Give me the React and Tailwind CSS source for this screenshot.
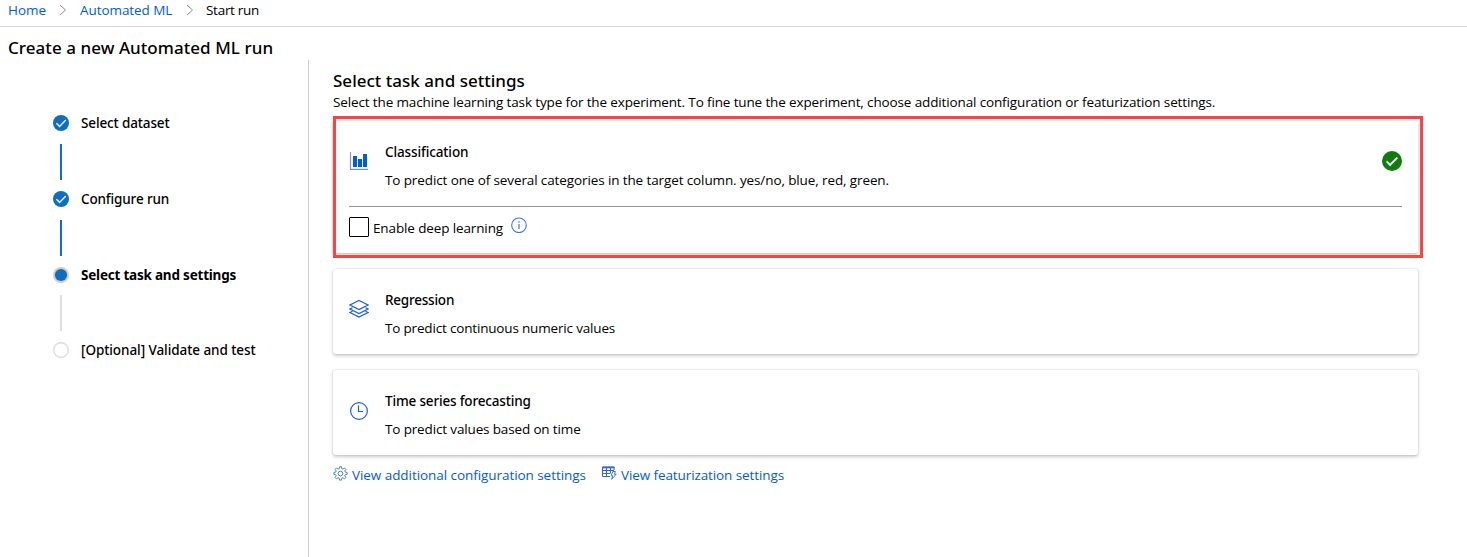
const STEPS = [
  { label: 'Select dataset', state: 'done', text: 'tracking-[-0.13px] font-medium' },
  { label: 'Configure run', state: 'done', text: 'tracking-[-0.14px] font-medium' },
  { label: 'Select task and settings', state: 'current', text: 'tracking-[-0.21px] font-bold' },
  { label: '[Optional] Validate and test', state: 'todo', text: 'tracking-[-0.07px] font-medium' },
];

function Crumb() {
  return (
    <svg className="h-3 w-2" viewBox="0 0 8 12" fill="none" stroke="#8f8d8b" strokeWidth="1">
      <path d="M1 1l5.5 5L1 11" />
    </svg>
  );
}

function StepIcon({ state }) {
  if (state === 'done') {
    return (
      <svg className="size-4" viewBox="0 0 16 16">
        <circle cx="8" cy="8" r="8" fill="#106ebe" />
        <path d="M3.4 8.200l3.200 3.200 6.200-6.400" fill="none" stroke="#e9f3fb" strokeWidth="1.500" />
      </svg>
    );
  }
  if (state === 'current') {
    return (
      <svg className="size-4" viewBox="0 0 16 16">
        <circle cx="8" cy="8" r="8" fill="#d0cecc" />
        <circle cx="8" cy="8" r="6.1" fill="#106ebe" />
      </svg>
    );
  }
  return (
    <svg className="size-4" viewBox="0 0 16 16">
      <circle cx="8" cy="8" r="7.3" fill="#fff" stroke="#e1dfdd" strokeWidth="1.4" />
    </svg>
  );
}

function Chart() {
  return (
    <svg className="h-5 w-5" viewBox="0 0 20 20">
      <path d="M1.500 1v17.500" stroke="#8a8ee8" strokeWidth="1.200" fill="none" />
      <path d="M1 18.400h18" stroke="#6f8fe6" strokeWidth="1.200" fill="none" />
      <path d="M4 5h4v11H4zM9 8h4v8H9zM14 3h4v13h-4z" fill="#015cda" />
    </svg>
  );
}

function Layers() {
  return (
    <svg className="h-5 w-5" viewBox="0 0 20 20" fill="none" stroke="#1f62dc" strokeWidth="1.2">
      <path d="M10 1.500l9 4.500-9 4.500-9-4.500z" />
      <path d="M3.500 8.700L1 10l9 4.500 9-4.500-2.500-1.300M3.500 12.200L1 13.500 10 18l9-4.500-2.500-1.300" />
    </svg>
  );
}

function Clock() {
  return (
    <svg className="h-5 w-5" viewBox="0 0 20 20" fill="none" stroke="#1f62dc" strokeWidth="1.2">
      <circle cx="10" cy="10" r="8.400" />
      <path d="M9.500 4.500v6H14" />
    </svg>
  );
}

function Gear() {
  return (
    <svg className="size-[15px]" viewBox="0 0 16 16" fill="none" stroke="#3f78e0" strokeWidth="1" strokeLinejoin="round">
      <path d="M7 .8h2l.4 2 1.200.5 1.700-1.200 1.500 1.500-1.200 1.700.5 1.200 2 .4v2l-2 .4-.5 1.200 1.200 1.700-1.500 1.500-1.700-1.200-1.200.5-.4 2H7l-.4-2-1.200-.5-1.700 1.200-1.500-1.500 1.200-1.700-.5-1.200-2-.4v-2l2-.4.500-1.200-1.200-1.700 1.500-1.500 1.700 1.200 1.200-.5z" />
      <circle cx="8" cy="8" r="2.500" />
    </svg>
  );
}

function TableBolt() {
  return (
    <svg className="h-[14px] w-[15px]" viewBox="0 0 15 14" fill="none" stroke="#3565d2" strokeWidth="1">
      <path d="M8 10.500H.5V1h11.500v3" />
      <path d="M0 1.500h12.500" strokeWidth="1.600" />
      <path d="M.5 4.500h11.500M.5 7.500h8M4.500 2v8.500M8.500 2v5" />
      <path d="M10.800 5.500h2.700l-1.200 2.700h1.900L9.600 13.300l1.100-3.600H9.200z" fill="#fff" strokeWidth="0.900" />
    </svg>
  );
}

const CARD = 'flex w-[1085px] rounded-[3px] bg-white px-4 shadow-[0_1.6px_3.6px_rgba(0,0,0,0.2),0_0_2px_rgba(0,0,0,0.14)]';
const TITLE = "font-['Noto_Sans',sans-serif] font-medium leading-5";

function CardText({ title, titleClass, text, textClass }) {
  return (
    <div className="flex flex-col gap-2">
      <h2 className={`${TITLE} ${titleClass}`}>{title}</h2>
      <p className={`leading-5 ${textClass}`}>{text}</p>
    </div>
  );
}

export default function App() {
  return (
    <div className="flex h-[557px] w-[1467px] flex-col overflow-hidden whitespace-nowrap bg-white font-['Open_Sans',sans-serif] text-[13.5px] text-black">
      <nav className="flex h-[27px] shrink-0 items-start border-b border-[#d6d6d6] pl-2 leading-5">
        <a className="w-[51px] text-[#015cda]">Home</a>
        <span className="w-[21px] pt-1"><Crumb /></span>
        <a className="w-[106px] tracking-[-0.07px] text-[#015cda]">Automated ML</a>
        <span className="w-[20px] pt-1"><Crumb /></span>
        <span className="tracking-[-0.28px]">Start run</span>
      </nav>
      <h1 className="h-[33px] shrink-0 pl-2 pt-[9px] font-['Noto_Sans',sans-serif] text-[17px] font-medium leading-6 tracking-[0.055px]">
        Create a new Automated ML run
      </h1>
      <div className="flex flex-1">
        <aside className="w-[309px] border-r border-[#d2d0ce] pl-[53px] pt-[55px]">
          {STEPS.map((s, i) => (
            <div key={s.label}>
              <div className="flex h-4 items-center gap-3">
                <StepIcon state={s.state} />
                <span className={`font-['Noto_Sans',sans-serif] leading-4 ${s.text}`}>{s.label}</span>
              </div>
              {i < 3 && (
                <div className={i === 2 ? 'pb-[11px] pl-[7px] pt-3' : 'pb-[11px] pl-[7px] pt-[13px]'}>
                  <div className={i === 2 ? 'h-9 w-0.5 bg-[#e1dfdd]' : 'h-9 w-0.5 bg-[#106ebe]'} />
                </div>
              )}
            </div>
          ))}
        </aside>
        <main className="flex flex-col pl-6 pt-[9px]">
          <h2 className="font-['Noto_Sans',sans-serif] text-[17px] font-medium leading-6 tracking-[0.01px]">Select task and settings</h2>
          <p className="h-[28px] leading-[19px] tracking-[-0.133px]">
            Select the machine learning task type for the experiment. To fine tune the experiment, choose additional configuration or featurization settings.
          </p>
          <div className="relative mb-4">
            <section className={`${CARD} h-[132px] flex-col pt-[21px]`}>
              <div className="flex h-[65px] w-[1053px] border-b border-[#979593]">
                <div className="w-9 pt-[9px]"><Chart /></div>
                <CardText title="Classification" titleClass="tracking-[-0.12px]" text="To predict one of several categories in the target column. yes/no, blue, red, green." textClass="tracking-[-0.113px]" />
                <svg className="ml-auto mt-[9px] size-5" viewBox="0 0 20 20">
                  <circle cx="10" cy="10" r="10" fill="#107c10" />
                  <path d="M4.600 10.300l3.500 3.500 7.200-7.200" fill="none" stroke="#fff" strokeWidth="1.900" />
                </svg>
              </div>
              <label className="flex items-start pt-[10px]">
                <span className="size-5 rounded-[1px] border border-black" />
                <span className="pl-1 pt-px leading-5 tracking-[-0.127px]">Enable deep learning</span>
                <svg className="ml-2 size-4" viewBox="0 0 16 16" fill="none" stroke="#3b76e4">
                  <circle cx="8" cy="8.300" r="7.300" strokeWidth="1.100" />
                  <path d="M8 7v5M8 4.300v1.400" strokeWidth="1.200" />
                </svg>
              </label>
            </section>
            <div className="pointer-events-none absolute -top-[5px] left-0 h-[142px] w-[1090px] border-[3px] border-[#fc4343]" />
          </div>
          <section className={`${CARD} mb-4 h-[85px] pt-[21px]`}>
            <div className="w-9 pt-[9px]"><Layers /></div>
            <CardText title="Regression" titleClass="tracking-[-0.22px]" text="To predict continuous numeric values" textClass="tracking-[-0.175px]" />
          </section>
          <section className={`${CARD} h-[85px] pt-[21px]`}>
            <div className="w-9 pt-[10px]"><Clock /></div>
            <CardText title="Time series forecasting" titleClass="tracking-[-0.17px]" text="To predict values based on time" textClass="tracking-[-0.145px]" />
          </section>
          <div className="flex pt-[10px] leading-5 text-[#015cda]">
            <a className="flex w-[269px] gap-1"><span className="pt-px"><Gear /></span><span className="tracking-[-0.06px]">View additional configuration settings</span></a>
            <a className="flex gap-1"><span className="pt-px"><TableBolt /></span><span className="tracking-[-0.1px]">View featurization settings</span></a>
          </div>
        </main>
      </div>
    </div>
  );
}
